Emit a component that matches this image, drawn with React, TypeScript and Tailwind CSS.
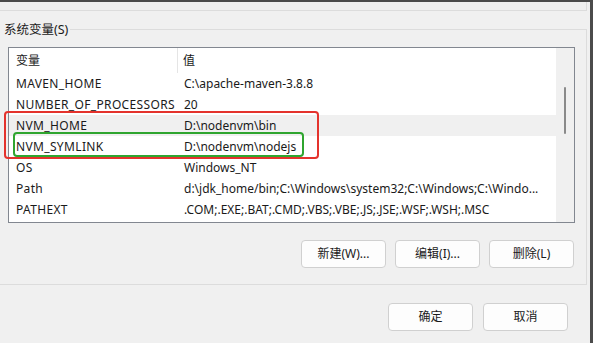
const rows = [
  { name: "MAVEN_HOME", value: "C:\\apache-maven-3.8.8" },
  { name: "NUMBER_OF_PROCESSORS", value: "20" },
  { name: "NVM_HOME", value: "D:\\nodenvm\\bin", selected: true },
  { name: "NVM_SYMLINK", value: "D:\\nodenvm\\nodejs" },
  { name: "OS", value: "Windows_NT" },
  {
    name: "Path",
    value: "d:\\jdk_home/bin;C:\\Windows\\system32;C:\\Windows;C:\\Windo...",
  },
  { name: "PATHEXT", value: ".COM;.EXE;.BAT;.CMD;.VBS;.VBE;.JS;.JSE;.WSF;.WSH;.MSC" },
];

function WinButton({ label }: { label: string }) {
  return (
    <button className="h-[28px] w-[85px] rounded-[4px] border border-[#d0d0d0] bg-[#fdfdfd] text-[12px] text-[#1a1a1a]">
      {label}
    </button>
  );
}

export default function App() {
  return (
    <div
      className="relative h-[343px] w-[593px] overflow-hidden border-t-2 border-r-[3px] border-[#4b4b4b] bg-[#f0f0f0] text-[12px] text-[#1a1a1a]"
      style={{ fontFamily: '"Noto Sans", "Noto Sans CJK SC", sans-serif' }}
    >
      {/* bottom of the user variables group */}
      <div className="mr-[3px] h-[9px] border-b border-r border-[#dcdcdc]" />

      {/* system variables group */}
      <div className="relative mt-[18px] mr-[3px] border-t border-r border-b border-[#dcdcdc] pt-[17px] pr-[11px] pb-[16px] pl-[8px]">
        <span className="absolute -top-[9px] left-0 bg-[#f0f0f0] pr-[2px] pl-[4px] text-[12.5px] leading-[17px]">
          系统变量(S)
        </span>

        <div className="flex h-[176px] border border-[#828790] bg-white">
          <div className="flex-1">
            <div className="flex h-[25px] items-center">
              <div className="flex h-full w-[169px] items-center border-r border-[#e5e5e5] pl-[7px]">变量</div>
              <div className="pl-[5px]">值</div>
            </div>
            {rows.map((r) => (
              <div
                key={r.name}
                className={`flex h-[21px] items-center whitespace-nowrap ${r.selected ? "bg-[#f0f0f0]" : ""}`}
              >
                <div className="w-[169px] pl-[7px] tracking-[0.35px]">{r.name}</div>
                <div className="pl-[6px]">{r.value}</div>
              </div>
            ))}
          </div>
          <div className="flex w-[18px] justify-center bg-[#f0f0f0] pt-[39px]">
            <div className="h-[47px] w-[2px] rounded-full bg-[#8a8a8a]" />
          </div>
        </div>

        <div className="mt-[17px] mr-[1px] flex justify-end gap-[9px]">
          <WinButton label="新建(W)..." />
          <WinButton label="编辑(I)..." />
          <WinButton label="删除(L)" />
        </div>
      </div>

      <div className="mt-[18px] mr-[22px] flex justify-end gap-[10px]">
        <WinButton label="确定" />
        <WinButton label="取消" />
      </div>

      {/* annotation boxes */}
      <div className="absolute top-[109px] left-[4px] h-[48px] w-[315px] rounded-[4px] border-2 border-[#e4332d]" />
      <div className="absolute top-[130px] left-[13px] h-[25px] w-[291px] rounded-[4px] border-2 border-[#2fa52f]" />
    </div>
  );
}
